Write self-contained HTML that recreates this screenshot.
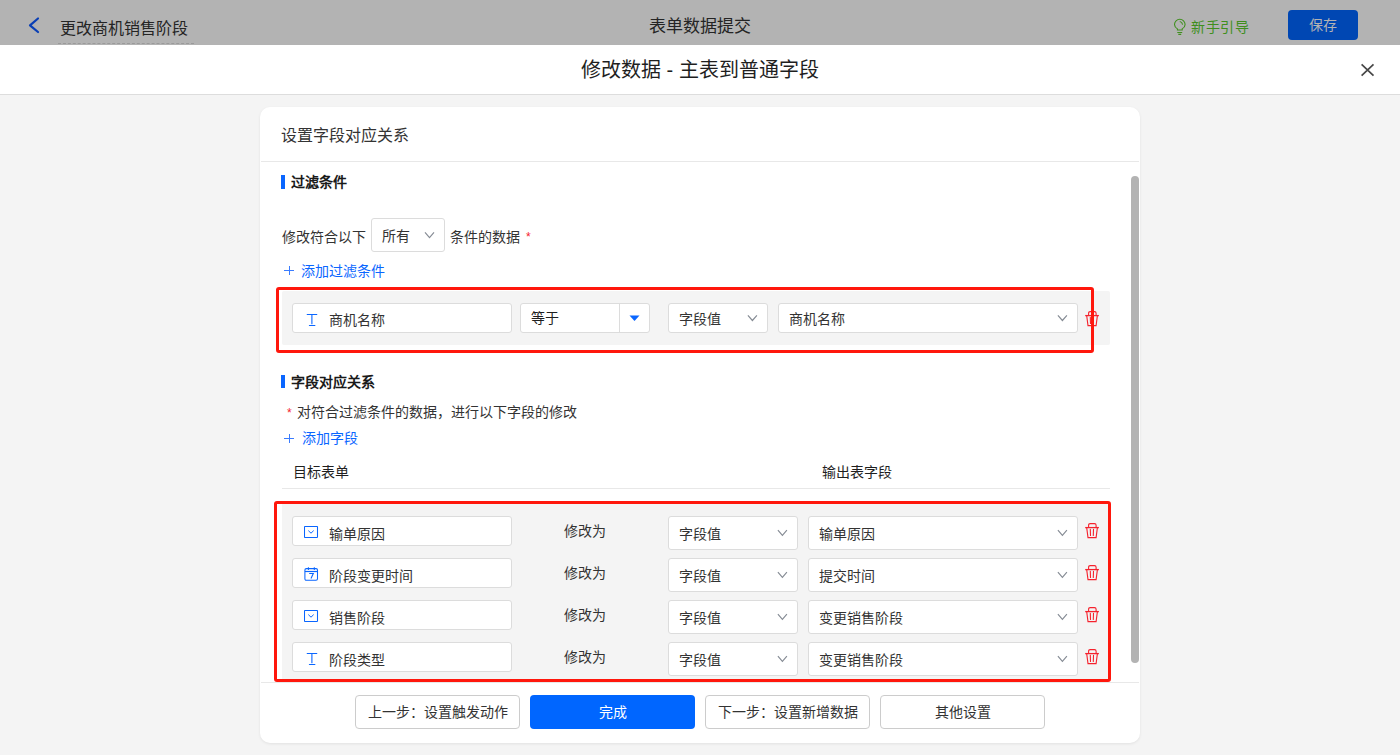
<!DOCTYPE html>
<html lang="zh-CN"><head><meta charset="utf-8">
<style>
*{box-sizing:border-box;margin:0;padding:0}
html,body{width:1400px;height:755px;overflow:hidden;background:#f4f4f4;font-family:"Liberation Sans",sans-serif;color:#333;font-size:14px}
.a{position:absolute}
.t{position:absolute;white-space:nowrap;line-height:1}
svg{display:block}
</style></head><body>
<div class="a" style="left:0px;top:0px;width:1400px;height:45px;background:#b3b3b3"></div>
<svg class="a" style="left:27px;top:16px" width="14" height="19"><polyline points="11,2.5 3,9.3 11,16" fill="none" stroke="#0a3fb5" stroke-width="2.2" stroke-linecap="round" stroke-linejoin="round"/></svg>
<div class="t" style="left:60px;top:21px;font-size:16px;color:#242424;font-weight:normal;">更改商机销售阶段</div>
<div class="a" style="left:58px;top:43px;width:136px;height:0;border-top:1px dashed #9a9a9a"></div>
<div class="t" style="left:649px;top:18px;font-size:17px;color:#242424;font-weight:normal;">表单数据提交</div>
<svg class="a" style="left:1172px;top:17px" width="16" height="19" viewBox="0 0 16 19"><path d="M5.4 13.0 V11.9 Q2.5 10.2 2.5 7.6 A5.3 5.3 0 1 1 13.1 7.6 Q13.1 10.2 10.2 11.9 V13.0 Z" fill="none" stroke="#3f8f1d" stroke-width="1.1"/><path d="M7.8 4.5 Q10.2 5.0 10.6 7.6" fill="none" stroke="#3f8f1d" stroke-width="1.1"/><path d="M5.3 15.5 H10.2 M6.3 17.4 H9.2" stroke="#3f8f1d" stroke-width="1.1"/></svg>
<div class="t" style="left:1191px;top:20px;font-size:14px;color:#3f8f1d;font-weight:normal;letter-spacing:0.6px">新手引导</div>
<div class="a" style="left:1288px;top:10px;width:70px;height:30px;background:#0047b3;border-radius:4px"></div>
<div class="t" style="left:1309px;top:18px;font-size:14px;color:#b3b3b3;font-weight:normal;">保存</div>
<div class="a" style="left:0px;top:45px;width:1400px;height:50px;background:#fff;border-bottom:1px solid #dddddd"></div>
<div class="t" style="left:581px;top:60px;font-size:20px;color:#1f1f1f;font-weight:normal;">修改数据 - 主表到普通字段</div>
<svg class="a" style="left:1359px;top:62px" width="17" height="17"><path d="M2.6 2.4 L14.5 13.6 M14.5 2.4 L2.6 13.6" stroke="#474747" stroke-width="1.7"/></svg>
<div class="a" style="left:260px;top:107px;width:880px;height:636px;background:#fff;border-radius:10px;box-shadow:0 1px 3px rgba(0,0,0,0.08)"></div>
<div class="t" style="left:281px;top:128px;font-size:16px;color:#333;font-weight:normal;">设置字段对应关系</div>
<div class="a" style="left:261px;top:161px;width:878px;height:1px;background:#e8e8e8"></div>
<div class="a" style="left:1131px;top:176px;width:8px;height:487px;background:#b3b3b3;border-radius:4px"></div>
<div class="a" style="left:281px;top:175px;width:4px;height:14px;background:#0a66ff"></div>
<div class="t" style="left:291px;top:175px;font-size:14px;color:#1a1a1a;font-weight:bold;">过滤条件</div>
<div class="t" style="left:282px;top:230px;font-size:14px;color:#333;font-weight:normal;">修改符合以下</div>
<div class="a" style="left:371px;top:218px;width:74px;height:34px;background:#fff;border:1px solid #dcdcdc;border-radius:3px"></div>
<div class="t" style="left:382px;top:229px;font-size:14px;color:#333;font-weight:normal;">所有</div>
<svg class="a" style="left:423px;top:230px" width="14" height="10"><polyline points="2.00,2.40 6.50,7.60 11.00,2.40" fill="none" stroke="#858b94" stroke-width="1.15"/></svg>
<div class="t" style="left:450px;top:230px;font-size:14px;color:#333;font-weight:normal;">条件的数据</div>
<div class="t" style="left:526px;top:231px;font-size:12px;color:#f5222d;font-weight:normal;">*</div>
<svg class="a" style="left:283px;top:265px" width="12" height="12"><path d="M1 5.5 H11 M6.5 1 V10" stroke="#3a7cff" stroke-width="1"/></svg>
<div class="t" style="left:301px;top:264px;font-size:14px;color:#0a66ff;font-weight:normal;">添加过滤条件</div>
<div class="a" style="left:282px;top:291px;width:828px;height:54px;background:#f4f4f4;border-radius:2px"></div>
<div class="a" style="left:292px;top:303px;width:220px;height:30px;background:#fff;border:1px solid #dcdcdc;border-radius:3px"></div>
<svg class="a" style="left:306px;top:313px" width="12" height="14" viewBox="0 0 12 14"><path d="M1.2 1.5 H10.8 M5.9 1.5 V10.8 M3.4 12.5 H8.9" fill="none" stroke="#0a66ff" stroke-width="1.1" stroke-linecap="round"/></svg>
<div class="t" style="left:329px;top:313px;font-size:14px;color:#333;font-weight:normal;">商机名称</div>
<div class="a" style="left:520px;top:303px;width:130px;height:30px;background:#fff;border:1px solid #dcdcdc;border-radius:3px"></div>
<div class="a" style="left:619px;top:304px;width:1px;height:28px;background:#dcdcdc"></div>
<svg class="a" style="left:629px;top:315px" width="11" height="7"><polygon points="0.5,0.5 10.5,0.5 5.5,6" fill="#0a66ff"/></svg>
<div class="t" style="left:531px;top:311px;font-size:14px;color:#1f1f1f;font-weight:normal;">等于</div>
<div class="a" style="left:668px;top:303px;width:100px;height:30px;background:#fff;border:1px solid #dcdcdc;border-radius:3px"></div>
<div class="t" style="left:679px;top:312px;font-size:14px;color:#333;font-weight:normal;">字段值</div>
<svg class="a" style="left:745px;top:313px" width="14" height="10"><polyline points="2.90,2.30 7.40,7.50 11.90,2.30" fill="none" stroke="#858b94" stroke-width="1.15"/></svg>
<div class="a" style="left:778px;top:303px;width:300px;height:30px;background:#fff;border:1px solid #dcdcdc;border-radius:3px"></div>
<div class="t" style="left:789px;top:312px;font-size:14px;color:#333;font-weight:normal;">商机名称</div>
<svg class="a" style="left:1055px;top:313px" width="14" height="10"><polyline points="2.90,2.30 7.40,7.50 11.90,2.30" fill="none" stroke="#858b94" stroke-width="1.15"/></svg>
<svg class="a" style="left:1085px;top:311px" width="15" height="16" viewBox="0 0 15 16"><path d="M3.6 4.5 V2.2 Q3.6 0.6 5.2 0.6 H9.5 Q11.1 0.6 11.1 2.2 V4.5" fill="none" stroke="#f5222d" stroke-width="1.1"/><path d="M0.2 4.6 H13.9" stroke="#f5222d" stroke-width="1.3"/><path d="M1.7 4.6 L3.0 14.6 H11.1 L12.4 4.6" fill="none" stroke="#f5222d" stroke-width="1.1"/><path d="M5.3 6.3 L5.5 12.5 M8.5 6.3 L8.3 12.5" stroke="#f5222d" stroke-width="1.1" stroke-linecap="round"/></svg>
<div class="a" style="left:276px;top:287px;width:818px;height:66px;border:3px solid #ff170c;border-radius:3px"></div>
<div class="a" style="left:281px;top:375px;width:4px;height:13px;background:#0a66ff"></div>
<div class="t" style="left:291px;top:375px;font-size:14px;color:#1a1a1a;font-weight:bold;">字段对应关系</div>
<div class="t" style="left:287px;top:407px;font-size:12px;color:#f5222d;font-weight:normal;">*</div>
<div class="t" style="left:297px;top:405px;font-size:14px;color:#333;font-weight:normal;">对符合过滤条件的数据，进行以下字段的修改</div>
<svg class="a" style="left:283px;top:433px" width="12" height="12"><path d="M1 5.5 H11 M6.5 1 V10" stroke="#3a7cff" stroke-width="1"/></svg>
<div class="t" style="left:302px;top:431px;font-size:14px;color:#0a66ff;font-weight:normal;">添加字段</div>
<div class="t" style="left:293px;top:465px;font-size:14px;color:#1f1f1f;font-weight:normal;">目标表单</div>
<div class="t" style="left:822px;top:465px;font-size:14px;color:#1f1f1f;font-weight:normal;">输出表字段</div>
<div class="a" style="left:282px;top:488px;width:828px;height:1px;background:#e8e8e8"></div>
<div class="a" style="left:282px;top:504px;width:828px;height:175px;background:#f4f4f4"></div>
<div class="a" style="left:292px;top:516px;width:220px;height:30px;background:#fff;border:1px solid #dcdcdc;border-radius:3px"></div>
<svg class="a" style="left:304px;top:526px" width="15" height="13" viewBox="0 0 15 13"><rect x="0.5" y="0.5" width="13" height="11" rx="0.6" fill="none" stroke="#0a66ff" stroke-width="1.05"/><polyline points="4.3,4.6 7.0,7.2 9.7,4.6" fill="none" stroke="#0a66ff" stroke-width="1"/></svg>
<div class="t" style="left:329px;top:527px;font-size:14px;color:#333;font-weight:normal;">输单原因</div>
<div class="t" style="left:564px;top:524px;font-size:14px;color:#333;font-weight:normal;">修改为</div>
<div class="a" style="left:668px;top:516px;width:130px;height:34px;background:#fff;border:1px solid #dcdcdc;border-radius:3px"></div>
<div class="t" style="left:679px;top:527px;font-size:14px;color:#333;font-weight:normal;">字段值</div>
<svg class="a" style="left:775px;top:528px" width="14" height="10"><polyline points="2.90,2.20 7.40,7.40 11.90,2.20" fill="none" stroke="#858b94" stroke-width="1.15"/></svg>
<div class="a" style="left:808px;top:516px;width:270px;height:34px;background:#fff;border:1px solid #dcdcdc;border-radius:3px"></div>
<div class="t" style="left:819px;top:527px;font-size:14px;color:#333;font-weight:normal;">输单原因</div>
<svg class="a" style="left:1055px;top:528px" width="14" height="10"><polyline points="2.90,2.20 7.40,7.40 11.90,2.20" fill="none" stroke="#858b94" stroke-width="1.15"/></svg>
<svg class="a" style="left:1085px;top:523px" width="15" height="16" viewBox="0 0 15 16"><path d="M3.6 4.5 V2.2 Q3.6 0.6 5.2 0.6 H9.5 Q11.1 0.6 11.1 2.2 V4.5" fill="none" stroke="#f5222d" stroke-width="1.1"/><path d="M0.2 4.6 H13.9" stroke="#f5222d" stroke-width="1.3"/><path d="M1.7 4.6 L3.0 14.6 H11.1 L12.4 4.6" fill="none" stroke="#f5222d" stroke-width="1.1"/><path d="M5.3 6.3 L5.5 12.5 M8.5 6.3 L8.3 12.5" stroke="#f5222d" stroke-width="1.1" stroke-linecap="round"/></svg>
<div class="a" style="left:292px;top:558px;width:220px;height:30px;background:#fff;border:1px solid #dcdcdc;border-radius:3px"></div>
<svg class="a" style="left:304px;top:567px" width="15" height="15" viewBox="0 0 15 15"><path d="M2.4 1.6 H12.0 Q13.5 1.6 13.5 3.1 V11.7 Q13.5 13.2 12.0 13.2 H2.4 Q0.9 13.2 0.9 11.7 V3.1 Q0.9 1.6 2.4 1.6 Z" fill="none" stroke="#0a66ff" stroke-width="1.05"/><path d="M0.9 4.5 H13.5" stroke="#0a66ff" stroke-width="1.2"/><path d="M4.4 0.2 V3.0 M10.3 0.2 V3.0" stroke="#0a66ff" stroke-width="1.05"/><path d="M5.2 6.5 H9.3 L7.0 11.6" fill="none" stroke="#0a66ff" stroke-width="1.1"/></svg>
<div class="t" style="left:329px;top:569px;font-size:14px;color:#333;font-weight:normal;">阶段变更时间</div>
<div class="t" style="left:564px;top:566px;font-size:14px;color:#333;font-weight:normal;">修改为</div>
<div class="a" style="left:668px;top:558px;width:130px;height:34px;background:#fff;border:1px solid #dcdcdc;border-radius:3px"></div>
<div class="t" style="left:679px;top:569px;font-size:14px;color:#333;font-weight:normal;">字段值</div>
<svg class="a" style="left:775px;top:570px" width="14" height="10"><polyline points="2.90,2.20 7.40,7.40 11.90,2.20" fill="none" stroke="#858b94" stroke-width="1.15"/></svg>
<div class="a" style="left:808px;top:558px;width:270px;height:34px;background:#fff;border:1px solid #dcdcdc;border-radius:3px"></div>
<div class="t" style="left:819px;top:569px;font-size:14px;color:#333;font-weight:normal;">提交时间</div>
<svg class="a" style="left:1055px;top:570px" width="14" height="10"><polyline points="2.90,2.20 7.40,7.40 11.90,2.20" fill="none" stroke="#858b94" stroke-width="1.15"/></svg>
<svg class="a" style="left:1085px;top:565px" width="15" height="16" viewBox="0 0 15 16"><path d="M3.6 4.5 V2.2 Q3.6 0.6 5.2 0.6 H9.5 Q11.1 0.6 11.1 2.2 V4.5" fill="none" stroke="#f5222d" stroke-width="1.1"/><path d="M0.2 4.6 H13.9" stroke="#f5222d" stroke-width="1.3"/><path d="M1.7 4.6 L3.0 14.6 H11.1 L12.4 4.6" fill="none" stroke="#f5222d" stroke-width="1.1"/><path d="M5.3 6.3 L5.5 12.5 M8.5 6.3 L8.3 12.5" stroke="#f5222d" stroke-width="1.1" stroke-linecap="round"/></svg>
<div class="a" style="left:292px;top:600px;width:220px;height:30px;background:#fff;border:1px solid #dcdcdc;border-radius:3px"></div>
<svg class="a" style="left:304px;top:610px" width="15" height="13" viewBox="0 0 15 13"><rect x="0.5" y="0.5" width="13" height="11" rx="0.6" fill="none" stroke="#0a66ff" stroke-width="1.05"/><polyline points="4.3,4.6 7.0,7.2 9.7,4.6" fill="none" stroke="#0a66ff" stroke-width="1"/></svg>
<div class="t" style="left:329px;top:611px;font-size:14px;color:#333;font-weight:normal;">销售阶段</div>
<div class="t" style="left:564px;top:608px;font-size:14px;color:#333;font-weight:normal;">修改为</div>
<div class="a" style="left:668px;top:600px;width:130px;height:34px;background:#fff;border:1px solid #dcdcdc;border-radius:3px"></div>
<div class="t" style="left:679px;top:611px;font-size:14px;color:#333;font-weight:normal;">字段值</div>
<svg class="a" style="left:775px;top:612px" width="14" height="10"><polyline points="2.90,2.20 7.40,7.40 11.90,2.20" fill="none" stroke="#858b94" stroke-width="1.15"/></svg>
<div class="a" style="left:808px;top:600px;width:270px;height:34px;background:#fff;border:1px solid #dcdcdc;border-radius:3px"></div>
<div class="t" style="left:819px;top:611px;font-size:14px;color:#333;font-weight:normal;">变更销售阶段</div>
<svg class="a" style="left:1055px;top:612px" width="14" height="10"><polyline points="2.90,2.20 7.40,7.40 11.90,2.20" fill="none" stroke="#858b94" stroke-width="1.15"/></svg>
<svg class="a" style="left:1085px;top:607px" width="15" height="16" viewBox="0 0 15 16"><path d="M3.6 4.5 V2.2 Q3.6 0.6 5.2 0.6 H9.5 Q11.1 0.6 11.1 2.2 V4.5" fill="none" stroke="#f5222d" stroke-width="1.1"/><path d="M0.2 4.6 H13.9" stroke="#f5222d" stroke-width="1.3"/><path d="M1.7 4.6 L3.0 14.6 H11.1 L12.4 4.6" fill="none" stroke="#f5222d" stroke-width="1.1"/><path d="M5.3 6.3 L5.5 12.5 M8.5 6.3 L8.3 12.5" stroke="#f5222d" stroke-width="1.1" stroke-linecap="round"/></svg>
<div class="a" style="left:292px;top:642px;width:220px;height:30px;background:#fff;border:1px solid #dcdcdc;border-radius:3px"></div>
<svg class="a" style="left:306px;top:652px" width="12" height="14" viewBox="0 0 12 14"><path d="M1.2 1.5 H10.8 M5.9 1.5 V10.8 M3.4 12.5 H8.9" fill="none" stroke="#0a66ff" stroke-width="1.1" stroke-linecap="round"/></svg>
<div class="t" style="left:329px;top:653px;font-size:14px;color:#333;font-weight:normal;">阶段类型</div>
<div class="t" style="left:564px;top:650px;font-size:14px;color:#333;font-weight:normal;">修改为</div>
<div class="a" style="left:668px;top:642px;width:130px;height:34px;background:#fff;border:1px solid #dcdcdc;border-radius:3px"></div>
<div class="t" style="left:679px;top:653px;font-size:14px;color:#333;font-weight:normal;">字段值</div>
<svg class="a" style="left:775px;top:654px" width="14" height="10"><polyline points="2.90,2.20 7.40,7.40 11.90,2.20" fill="none" stroke="#858b94" stroke-width="1.15"/></svg>
<div class="a" style="left:808px;top:642px;width:270px;height:34px;background:#fff;border:1px solid #dcdcdc;border-radius:3px"></div>
<div class="t" style="left:819px;top:653px;font-size:14px;color:#333;font-weight:normal;">变更销售阶段</div>
<svg class="a" style="left:1055px;top:654px" width="14" height="10"><polyline points="2.90,2.20 7.40,7.40 11.90,2.20" fill="none" stroke="#858b94" stroke-width="1.15"/></svg>
<svg class="a" style="left:1085px;top:649px" width="15" height="16" viewBox="0 0 15 16"><path d="M3.6 4.5 V2.2 Q3.6 0.6 5.2 0.6 H9.5 Q11.1 0.6 11.1 2.2 V4.5" fill="none" stroke="#f5222d" stroke-width="1.1"/><path d="M0.2 4.6 H13.9" stroke="#f5222d" stroke-width="1.3"/><path d="M1.7 4.6 L3.0 14.6 H11.1 L12.4 4.6" fill="none" stroke="#f5222d" stroke-width="1.1"/><path d="M5.3 6.3 L5.5 12.5 M8.5 6.3 L8.3 12.5" stroke="#f5222d" stroke-width="1.1" stroke-linecap="round"/></svg>
<div class="a" style="left:274px;top:501px;width:837px;height:181px;border:3px solid #ff170c;border-radius:3px"></div>
<div class="a" style="left:261px;top:682px;width:878px;height:1px;background:#e8e8e8"></div>
<div class="a" style="left:355px;top:695px;width:165px;height:34px;background:#fff;border:1px solid #cccccc;border-radius:4px;color:#333;text-align:center;line-height:32px;font-size:14px">上一步：设置触发动作</div>
<div class="a" style="left:530px;top:695px;width:165px;height:34px;background:#0066ff;border-radius:4px;color:#fff;text-align:center;line-height:34px;font-size:14px">完成</div>
<div class="a" style="left:705px;top:695px;width:165px;height:34px;background:#fff;border:1px solid #cccccc;border-radius:4px;color:#333;text-align:center;line-height:32px;font-size:14px">下一步：设置新增数据</div>
<div class="a" style="left:880px;top:695px;width:165px;height:34px;background:#fff;border:1px solid #cccccc;border-radius:4px;color:#333;text-align:center;line-height:32px;font-size:14px">其他设置</div>
</body></html>
